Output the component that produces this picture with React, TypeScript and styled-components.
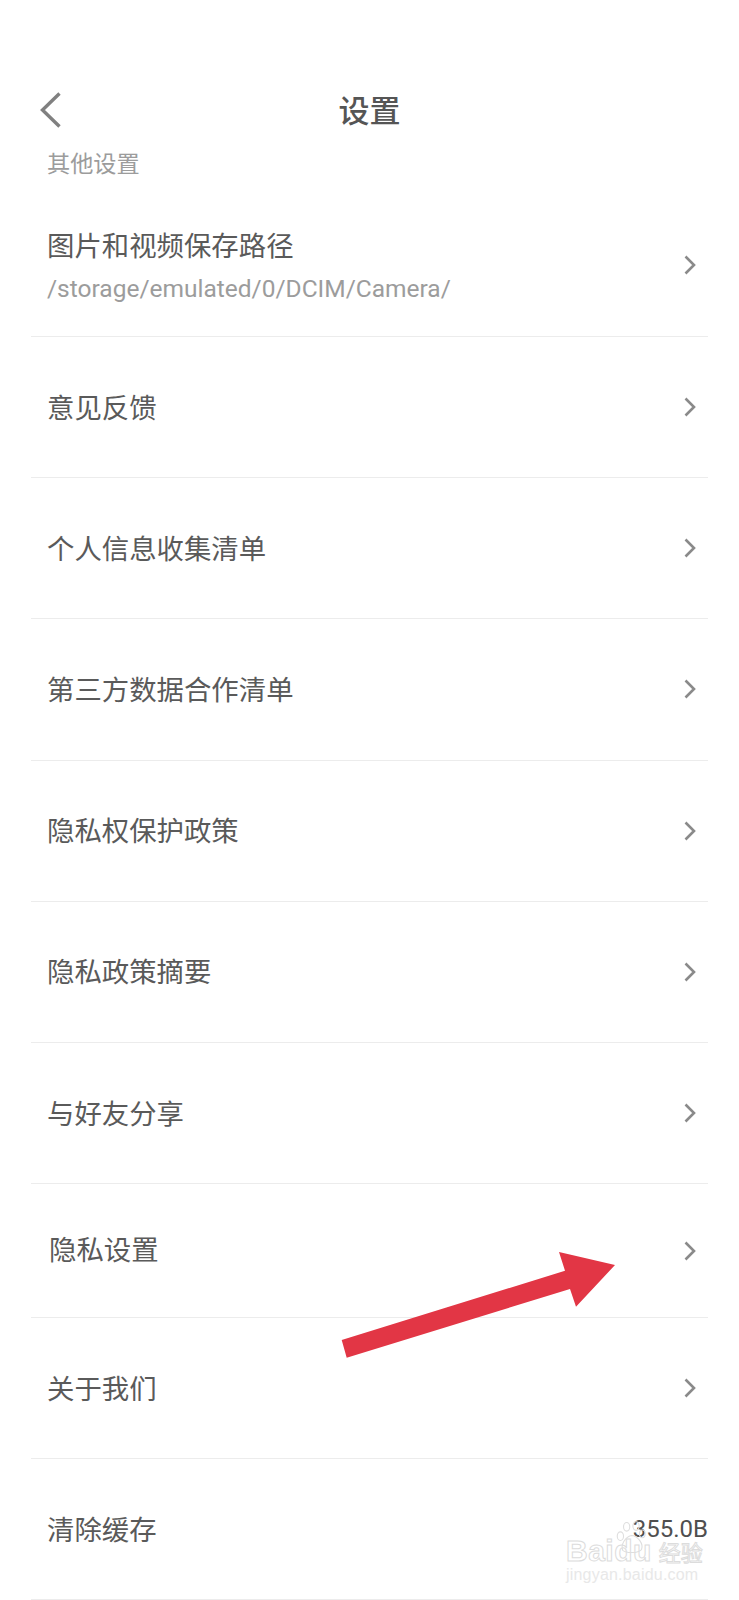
import React from 'react';
import styled, { createGlobalStyle } from 'styled-components';

const GlobalStyle = createGlobalStyle`
  html, body {
    margin: 0;
    padding: 0;
    background: #fff;
  }
  body {
    font-family: "Roboto", "Noto Sans CJK SC", sans-serif;
  }
`;

const Page = styled.div`
  position: relative;
  width: 739px;
  height: 1600px;
  overflow: hidden;
  background: #fff;
`;

const Header = styled.header`
  display: flex;
  align-items: center;
  justify-content: center;
  position: relative;
  height: 60px;
  margin-top: 82px;
`;

const BackButton = styled.svg`
  position: absolute;
  left: 39px;
  top: 9px;
  width: 24px;
  height: 38px;
  fill: none;
  stroke: #808080;
  stroke-width: 3.4;
`;

const Title = styled.h1`
  margin: 0;
  font-size: 31px;
  font-weight: 500;
  color: #555;
  line-height: 60px;
`;

const SectionLabel = styled.div`
  height: 44px;
  padding-left: 47px;
  font-size: 23.2px;
  line-height: 44px;
  color: #9c9c9c;
`;

const List = styled.div`
  margin: 0 31px;
`;

const Row = styled.div<{ $height: number; $shift?: number }>`
  display: flex;
  align-items: center;
  justify-content: space-between;
  box-sizing: border-box;
  height: ${props => props.$height}px;
  border-bottom: 1px solid #ececec;
  padding-left: 16px;
  padding-top: ${props => props.$shift || 0}px;
`;

const RowText = styled.div`
  display: flex;
  flex-direction: column;
  gap: 12px;
`;

const RowLabel = styled.div<{ $inset?: boolean }>`
  font-size: 27.4px;
  line-height: 32px;
  color: #5a5a5a;
  margin-top: ${props => (props.$inset ? '1px' : '3px')};
  padding-left: ${props => (props.$inset ? '2px' : '0')};
`;

const RowPath = styled.div`
  font-size: 24.5px;
  line-height: 28px;
  color: #9c9c9c;
`;

const Chevron = styled.svg`
  width: 14px;
  height: 22px;
  margin-right: 11px;
  fill: none;
  stroke: #8a8a8a;
  stroke-width: 2.6;
`;

const RowValue = styled.div`
  font-size: 24px;
  line-height: 30px;
  color: #4f4f4f;
`;

const ArrowMark = styled.svg`
  position: absolute;
  left: 335px;
  top: 1245px;
  width: 290px;
  height: 120px;
`;

const Watermark = styled.div`
  position: absolute;
  left: 566px;
  top: 1518px;
  width: 170px;
  height: 72px;
`;

const WatermarkLine = styled.div`
  display: flex;
  align-items: center;
  height: 42px;
  margin-top: 12px;
  font-family: "Liberation Sans", sans-serif;
  font-size: 30px;
  font-weight: 700;
  letter-spacing: 0.5px;
  line-height: 42px;
  color: #fff;
  -webkit-text-stroke: 1px #dcdcdc;
`;

const WatermarkCn = styled.span`
  margin-left: 7px;
  font-family: "Noto Sans CJK SC", sans-serif;
  font-size: 22px;
  font-weight: 400;
  letter-spacing: 0;
`;

const WatermarkUrl = styled.div`
  margin-top: -6px;
  font-family: "Liberation Sans", sans-serif;
  font-size: 16px;
  line-height: 18px;
  letter-spacing: 0.2px;
  color: #e8e8e8;
`;

const Paw = styled.svg`
  position: absolute;
  left: 45px;
  top: 0;
  width: 36px;
  height: 38px;
  fill: none;
  stroke: #dedede;
  stroke-width: 1.4;
`;

const rows = [
  { label: '意见反馈' },
  { label: '个人信息收集清单' },
  { label: '第三方数据合作清单' },
  { label: '隐私权保护政策' },
  { label: '隐私政策摘要' },
  { label: '与好友分享' },
];

const ChevronIcon = () => (
  <Chevron viewBox="0 0 14 22">
    <path d="M2.5 2.5 L11 11 L2.5 19.5" />
  </Chevron>
);

export default function App() {
  return (
    <Page>
      <GlobalStyle />
      <Header>
        <BackButton viewBox="0 0 24 38">
          <path d="M20.5 2.5 L3.5 19 L20.5 35.5" />
        </BackButton>
        <Title>设置</Title>
      </Header>
      <SectionLabel>其他设置</SectionLabel>
      <List>
        <Row $height={151} $shift={8}>
          <RowText>
            <RowLabel>图片和视频保存路径</RowLabel>
            <RowPath>/storage/emulated/0/DCIM/Camera/</RowPath>
          </RowText>
          <ChevronIcon />
        </Row>
        {rows.map(row => (
          <Row $height={141.2} key={row.label}>
            <RowLabel>{row.label}</RowLabel>
            <ChevronIcon />
          </Row>
        ))}
        <Row $height={134}>
          <RowLabel $inset>隐私设置</RowLabel>
          <ChevronIcon />
        </Row>
        <Row $height={141}>
          <RowLabel>关于我们</RowLabel>
          <ChevronIcon />
        </Row>
        <Row $height={141}>
          <RowLabel>清除缓存</RowLabel>
          <RowValue>355.0B</RowValue>
        </Row>
      </List>
      <ArrowMark viewBox="335 1245 290 120">
        <polygon
          points="341.7,1340 346.7,1357.7 570,1289 576,1306.7 615,1265 559,1252 565,1270.7"
          fill="#e23645"
        />
      </ArrowMark>
      <Watermark>
        <Paw viewBox="0 0 46 44">
          <ellipse cx="12" cy="21" rx="4" ry="5.5" />
          <ellipse cx="20" cy="9" rx="4" ry="5.5" />
          <ellipse cx="32" cy="8" rx="4" ry="5.5" />
          <ellipse cx="40" cy="18" rx="3.6" ry="5" />
          <path d="M26 20 C18 22 12 32 15 39 C20 43 34 43 39 38 C42 31 34 20 26 20 Z" />
        </Paw>
        <WatermarkLine>
          Baidu<WatermarkCn>经验</WatermarkCn>
        </WatermarkLine>
        <WatermarkUrl>jingyan.baidu.com</WatermarkUrl>
      </Watermark>
    </Page>
  );
}
